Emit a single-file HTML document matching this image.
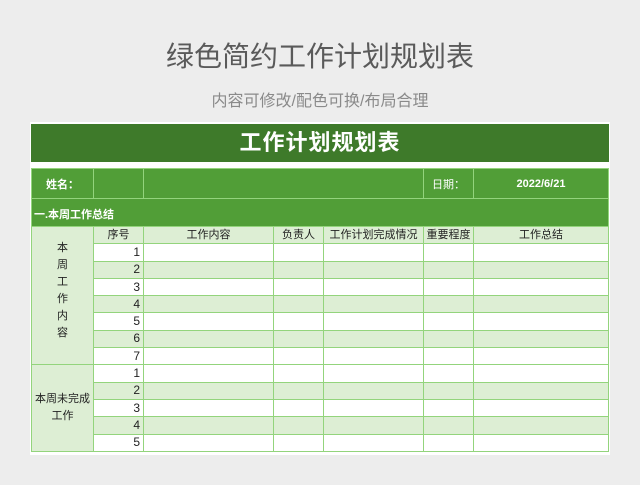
<!DOCTYPE html>
<html><head><meta charset="utf-8"><style>
*{margin:0;padding:0;box-sizing:border-box}
body{width:640px;height:485px;background:#ededed;position:relative;overflow:hidden;font-family:"Liberation Sans","Noto Sans CJK SC",sans-serif}
.t1{position:absolute;top:35px;left:0;width:640px;text-align:center;font-size:28px;color:#5a5a5a}
.t2{position:absolute;top:87px;left:0;width:640px;text-align:center;font-size:16px;color:#8a8a8a}
.card{position:absolute;left:30px;top:122px;width:580px;height:333px;background:#fff}
.bar{position:absolute;left:31px;top:124px;width:578px;height:38px;background:#3e7a2a;color:#fff;font-size:22px;font-weight:bold;text-align:center;line-height:38px;letter-spacing:1px}
table{position:absolute;left:31px;top:168px;border-collapse:collapse;table-layout:fixed;font-size:11px;color:#222}
td{border:1px solid #93d47c;text-align:center;padding:0;overflow:hidden;white-space:nowrap}
.g td,.g{background:#519e37;color:#fff;font-weight:bold}
.n{text-align:right;padding-right:3px;font-size:12px}
.l{background:#ddeed4}
tr.r td{height:17.3px;line-height:15px}
tr.a td.c{background:#ddeed4}
tr.w td.c{background:#fff}
</style></head><body>
<div class="t1">绿色简约工作计划规划表</div>
<div class="t2">内容可修改/配色可换/布局合理</div>
<div class="card"></div>
<div class="bar">工作计划规划表</div>
<table>
<colgroup><col style="width:62px"><col style="width:50px"><col style="width:130px"><col style="width:50px"><col style="width:100px"><col style="width:50px"><col style="width:135px"></colgroup>
<tr class="g" style="height:30px"><td>姓名：</td><td></td><td colspan="3"></td><td style="font-weight:normal">日期：</td><td>2022/6/21</td></tr>
<tr class="g" style="height:28px"><td colspan="7" style="text-align:left;vertical-align:bottom;padding:0 0 4px 2px;font-size:11px">一.本周工作总结</td></tr>
<tr class="r"><td class="l" rowspan="8" style="line-height:17px;padding-bottom:10px">本<br>周<br>工<br>作<br>内<br>容</td><td class="l">序号</td><td class="l">工作内容</td><td class="l">负责人</td><td class="l">工作计划完成情况</td><td class="l">重要程度</td><td class="l">工作总结</td></tr>
<tr class="r w"><td class="n c">1</td><td class="c"></td><td class="c"></td><td class="c"></td><td class="c"></td><td class="c"></td></tr>
<tr class="r a"><td class="n c">2</td><td class="c"></td><td class="c"></td><td class="c"></td><td class="c"></td><td class="c"></td></tr>
<tr class="r w"><td class="n c">3</td><td class="c"></td><td class="c"></td><td class="c"></td><td class="c"></td><td class="c"></td></tr>
<tr class="r a"><td class="n c">4</td><td class="c"></td><td class="c"></td><td class="c"></td><td class="c"></td><td class="c"></td></tr>
<tr class="r w"><td class="n c">5</td><td class="c"></td><td class="c"></td><td class="c"></td><td class="c"></td><td class="c"></td></tr>
<tr class="r a"><td class="n c">6</td><td class="c"></td><td class="c"></td><td class="c"></td><td class="c"></td><td class="c"></td></tr>
<tr class="r w"><td class="n c">7</td><td class="c"></td><td class="c"></td><td class="c"></td><td class="c"></td><td class="c"></td></tr>
<tr class="r w"><td class="l" rowspan="5" style="line-height:17px">本周未完成<br>工作</td><td class="n c">1</td><td class="c"></td><td class="c"></td><td class="c"></td><td class="c"></td><td class="c"></td></tr>
<tr class="r a"><td class="n c">2</td><td class="c"></td><td class="c"></td><td class="c"></td><td class="c"></td><td class="c"></td></tr>
<tr class="r w"><td class="n c">3</td><td class="c"></td><td class="c"></td><td class="c"></td><td class="c"></td><td class="c"></td></tr>
<tr class="r a"><td class="n c">4</td><td class="c"></td><td class="c"></td><td class="c"></td><td class="c"></td><td class="c"></td></tr>
<tr class="r w"><td class="n c">5</td><td class="c"></td><td class="c"></td><td class="c"></td><td class="c"></td><td class="c"></td></tr>
</table>
</body></html>
